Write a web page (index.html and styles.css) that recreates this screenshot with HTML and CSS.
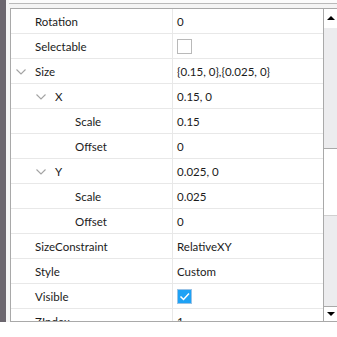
FILE: index.html
```html
<!DOCTYPE html>
<html>
<head>
    <meta charset="UTF-8">
    <title>Properties</title>
    <link rel="stylesheet" href="styles.css">
</head>
<body>
    <div class="frame">
        <div class="backdrop"></div>
        <div class="main">
            <div class="toolbar"></div>
            <div class="panel">
                <div class="grid">
                    <div class="row"><div class="name"><span class="slot"></span>Rotation</div><div class="value">0</div></div>
                    <div class="row"><div class="name"><span class="slot"></span>Selectable</div><div class="value"><span class="check"></span></div></div>
                    <div class="row"><div class="name"><span class="slot"><svg class="chev" width="10" height="6" viewBox="0 0 10 6"><polyline points="0.5,0.5 5,5 9.5,0.5"/></svg></span>Size</div><div class="value">{0.15, 0},{0.025, 0}</div></div>
                    <div class="row"><div class="name l1"><span class="slot"><svg class="chev" width="10" height="6" viewBox="0 0 10 6"><polyline points="0.5,0.5 5,5 9.5,0.5"/></svg></span>X</div><div class="value">0.15, 0</div></div>
                    <div class="row"><div class="name l2"><span class="slot"></span>Scale</div><div class="value">0.15</div></div>
                    <div class="row"><div class="name l2"><span class="slot"></span>Offset</div><div class="value">0</div></div>
                    <div class="row"><div class="name l1"><span class="slot"><svg class="chev" width="10" height="6" viewBox="0 0 10 6"><polyline points="0.5,0.5 5,5 9.5,0.5"/></svg></span>Y</div><div class="value">0.025, 0</div></div>
                    <div class="row"><div class="name l2"><span class="slot"></span>Scale</div><div class="value">0.025</div></div>
                    <div class="row"><div class="name l2"><span class="slot"></span>Offset</div><div class="value">0</div></div>
                    <div class="row"><div class="name"><span class="slot"></span>SizeConstraint</div><div class="value">RelativeXY</div></div>
                    <div class="row"><div class="name"><span class="slot"></span>Style</div><div class="value">Custom</div></div>
                    <div class="row"><div class="name"><span class="slot"></span>Visible</div><div class="value"><span class="check on"><svg width="13" height="13" viewBox="0 0 13 13"><polyline points="2.5,6.5 5.5,9.5 11,3.5"/></svg></span></div></div>
                    <div class="row"><div class="name"><span class="slot"></span>ZIndex</div><div class="value">1</div></div>
                </div>
                <div class="scroll">
                    <div class="btn up"><span class="tri-up"></span></div>
                    <div class="track top"></div>
                    <div class="thumb"></div>
                    <div class="track rest"></div>
                    <div class="btn down"><span class="tri-down"></span></div>
                </div>
            </div>
        </div>
    </div>
</body>
</html>
```
FILE: styles.css
```css
body {
    margin: 0;
    width: 337px;
    height: 337px;
    overflow: hidden;
    background: #ffffff;
    font-family: Lato, "Noto Sans", sans-serif;
    font-size: 11.5px;
    color: #1b1b1b;
}
.frame {
    display: flex;
    height: 322px;
}
.backdrop {
    width: 6px;
    background: #6b666e;
}
.main {
    flex: 1;
    display: flex;
    flex-direction: column;
    padding-left: 4px;
    background: #f4f4f4;
}
.toolbar {
    height: 3px;
    margin-left: -1px;
    border-bottom: 1px solid #b9b9b9;
    background: #fbfbfb;
    margin-bottom: 4px;
}
.panel {
    flex: 1;
    display: flex;
    min-height: 0;
    border: 1px solid #a9a9a9;
    border-right: none;
    background: #ffffff;
}
.grid {
    flex: 1;
    overflow: hidden;
}
.row {
    display: flex;
    height: 24px;
    border-bottom: 1px solid #e8e8e8;
}
.name {
    width: 157px;
    padding-left: 4px;
    display: flex;
    align-items: center;
    border-right: 1px solid #e8e8e8;
}
.name.l1 {
    padding-left: 24px;
    width: 137px;
}
.name.l2 {
    padding-left: 44px;
    width: 117px;
}
.slot {
    width: 20px;
    flex: none;
    display: flex;
    align-items: center;
}
.chev {
    margin-left: 1px;
    margin-top: 1px;
}
.chev polyline {
    fill: none;
    stroke: #a3a3a3;
    stroke-width: 1.1;
}
.value {
    flex: 1;
    padding-left: 4px;
    display: flex;
    align-items: center;
}
.check {
    width: 13px;
    height: 13px;
    border: 1px solid #b9b9b9;
    background: #ffffff;
    display: block;
}
.check.on {
    background: #1ea2f5;
    border-color: #9ac3e6;
}
.check svg {
    display: block;
}
.check polyline {
    fill: none;
    stroke: #ffffff;
    stroke-width: 1.5;
}
.scroll {
    width: 13px;
    border-left: 1px solid #a9a9a9;
    display: flex;
    flex-direction: column;
    background: #ececee;
}
.btn {
    height: 19px;
    background: #ffffff;
    display: flex;
    align-items: center;
    justify-content: center;
}
.btn.down {
    height: 14px;
    border-top: 1px solid #a9a9a9;
}
.track.top {
    height: 120px;
}
.thumb {
    height: 66px;
    background: #ffffff;
    border-top: 1px solid #a9a9a9;
    border-bottom: 1px solid #d0d0d0;
}
.track.rest {
    flex: 1;
}
.tri-up {
    width: 0;
    height: 0;
    border-left: 4px solid transparent;
    border-right: 4px solid transparent;
    border-bottom: 4px solid #000000;
    margin-top: -2px;
}
.tri-down {
    width: 0;
    height: 0;
    border-left: 4px solid transparent;
    border-right: 4px solid transparent;
    border-top: 4px solid #000000;
}
```
